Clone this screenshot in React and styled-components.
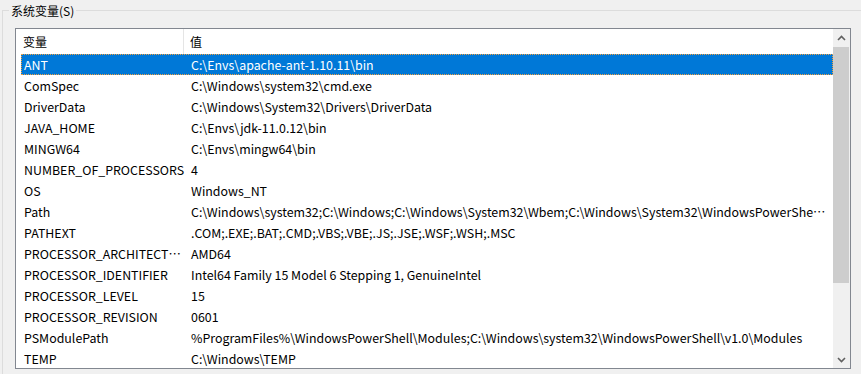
import React from 'react';
import styled, { createGlobalStyle } from 'styled-components';

const GlobalStyle = createGlobalStyle`
  html, body {
    margin: 0;
    padding: 0;
    background: #f0f0f0;
    overflow: hidden;
  }
  body {
    font-family: "Noto Sans CJK SC", "Noto Sans", sans-serif;
    font-size: 12px;
    color: #000;
  }
`;

const vars = [
    ['ANT', 'C:\\Envs\\apache-ant-1.10.11\\bin'],
    ['ComSpec', 'C:\\Windows\\system32\\cmd.exe'],
    ['DriverData', 'C:\\Windows\\System32\\Drivers\\DriverData'],
    ['JAVA_HOME', 'C:\\Envs\\jdk-11.0.12\\bin'],
    ['MINGW64', 'C:\\Envs\\mingw64\\bin'],
    ['NUMBER_OF_PROCESSORS', '4'],
    ['OS', 'Windows_NT'],
    ['Path', 'C:\\Windows\\system32;C:\\Windows;C:\\Windows\\System32\\Wbem;C:\\Windows\\System32\\WindowsPowerShell\\v1.0\\;C:\\Envs\\bin'],
    ['PATHEXT', '.COM;.EXE;.BAT;.CMD;.VBS;.VBE;.JS;.JSE;.WSF;.WSH;.MSC'],
    ['PROCESSOR_ARCHITECTURE', 'AMD64'],
    ['PROCESSOR_IDENTIFIER', 'Intel64 Family 15 Model 6 Stepping 1, GenuineIntel'],
    ['PROCESSOR_LEVEL', '15'],
    ['PROCESSOR_REVISION', '0601'],
    ['PSModulePath', '%ProgramFiles%\\WindowsPowerShell\\Modules;C:\\Windows\\system32\\WindowsPowerShell\\v1.0\\Modules'],
    ['TEMP', 'C:\\Windows\\TEMP'],
];

// group box: right and bottom edges fall outside the window
const Group = styled.fieldset`
  margin: 2px 0 0 2px;
  padding: 9px 0 0 0;
  width: 900px;
  height: 372px;
  border: 1px solid #dcdcdc;
  border-bottom: none;
  box-sizing: border-box;
`;

const Legend = styled.legend`
  margin-left: 6px;
  padding: 0 2px;
  line-height: 17px;
  color: #000;
`;

const ListBox = styled.div`
  margin-left: 12px;
  width: 836px;
  height: 341px;
  border: 1px solid #828790;
  box-sizing: border-box;
  background: #fff;
  display: flex;
  overflow: hidden;
  font-size: 12.4px;
`;

const Body = styled.div`
  flex: 1;
  min-width: 0;
  display: flex;
  flex-direction: column;
`;

const Header = styled.div`
  height: 25px;
  display: grid;
  grid-template-columns: 168px 1fr;
  flex-shrink: 0;
  font-size: 12px;
`;

const HeadCell = styled.div`
  display: flex;
  align-items: center;
  padding-left: ${p => p.$pad}px;
  border-right: ${p => (p.$divider ? '1px solid #e5e5e5' : 'none')};
`;

const Rows = styled.div`
  padding-left: 5px;
`;

const Row = styled.div`
  height: 21px;
  box-sizing: border-box;
  display: grid;
  grid-template-columns: 168px 1fr;
  align-items: center;
  background: ${p => (p.$selected ? '#0078d7' : 'transparent')};
  color: ${p => (p.$selected ? '#fff' : '#000')};
  border: 1px dotted ${p => (p.$selected ? '#f0a040' : 'transparent')};
`;

const Cell = styled.div`
  white-space: nowrap;
  overflow: hidden;
  text-overflow: ellipsis;
  padding-left: ${p => p.$pad}px;
  padding-right: ${p => p.$end}px;
`;

const ScrollBar = styled.div`
  width: 17px;
  flex-shrink: 0;
  background: #f0f0f0;
  display: flex;
  flex-direction: column;
`;

const ArrowBtn = styled.div`
  height: 17px;
  display: flex;
  align-items: center;
  justify-content: center;
`;

const Track = styled.div`
  flex: 1;
  padding-right: 1px;
`;

const Thumb = styled.div`
  height: 236px;
  margin-top: 1px;
  background: #cdcdcd;
`;

const Chevron = ({ down }) => (
    <svg width="9" height="6" viewBox="0 0 9 6" style={{ transform: down ? 'rotate(180deg)' : 'none' }}>
        <path d="M1 5 L4.5 1.5 L8 5" fill="none" stroke="#606060" strokeWidth="1.6" />
    </svg>
);

const App = () => {
    return (
        <>
            <GlobalStyle />
            <Group>
                <Legend>系统变量(S)</Legend>
                <ListBox>
                    <Body>
                        <Header>
                            <HeadCell $pad={7} $divider>变量</HeadCell>
                            <HeadCell $pad={6}>值</HeadCell>
                        </Header>
                        <Rows>
                            {vars.map(([name, value], index) => (
                                <Row key={name} $selected={index === 0}>
                                    <Cell $pad={2} $end={3}>{name}</Cell>
                                    <Cell $pad={1} $end={6}>{value}</Cell>
                                </Row>
                            ))}
                        </Rows>
                    </Body>
                    <ScrollBar>
                        <ArrowBtn><Chevron /></ArrowBtn>
                        <Track><Thumb /></Track>
                        <ArrowBtn><Chevron down /></ArrowBtn>
                    </ScrollBar>
                </ListBox>
            </Group>
        </>
    );
};

export default App;
